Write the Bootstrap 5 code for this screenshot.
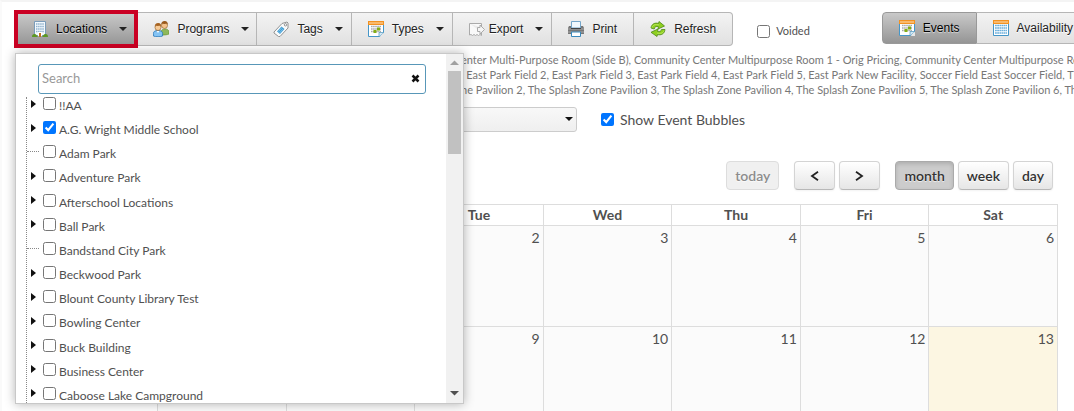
<!DOCTYPE html>
<html lang="en">
<head>
<meta charset="utf-8">
<meta name="viewport" content="width=device-width, initial-scale=1">
<title>Facility Calendar</title>
<link href="https://cdn.jsdelivr.net/npm/bootstrap@5.3.0/dist/css/bootstrap.min.css" rel="stylesheet">
<script src="https://cdn.jsdelivr.net/npm/bootstrap@5.3.0/dist/js/bootstrap.bundle.min.js"></script>
<style>
body{font-family:Lato,sans-serif;font-size:14px;color:#505050;background:#fff;overflow:hidden;min-height:100vh;border-top:2px solid #f4f4f4;border-left:2px solid #fafafa}
.toolbar{padding:10px 0 0 12px}
.tool-set{height:34px}
.view-set{height:32px;margin-left:72px}
.tool{display:flex;align-items:center;gap:8px;padding:0 16px;border:1px solid #b6b6b6;border-left-width:0;background:linear-gradient(#f3f3f3,#e1e1e1);font:12px/16px "Liberation Sans",sans-serif;color:#222;white-space:nowrap;text-shadow:0 1px 0 #fff}
.tool svg{width:16px;height:16px;flex:none}
.tool-menu{padding-right:8px}
.tool-slim{padding:0 7px 0 15px}
.tool-menu::after{content:"";border:4px solid transparent;border-top-color:#222;border-bottom:0;margin-left:4px}
.tool-on{background:linear-gradient(#c9c9c9,#959595);color:#000;border-color:#999;text-shadow:0 1px 1px #ddd}
.tool-end{border-radius:0 4px 4px 0}
.tool-start{border-radius:4px 0 0 4px;border-left-width:1px}
.tool-tight{gap:4px}
.tool-tight::after{margin-left:8px}
.marked .tool{height:100%;padding:0 10px 0 18px;border-left-width:0}
.marked::before{content:"";position:absolute;inset:-2px 0;border:4px solid #ca0023;pointer-events:none;z-index:2}
input[type=checkbox]{width:13px;height:13px;margin:0;flex:none;accent-color:#0075ff}
.voided{gap:6px;margin-left:24px;padding-top:5px;font-size:11px}
.tree-panel{position:absolute;top:51px;left:13px;width:449px;height:351px;background:#fff;border:1px solid #c8c8c8;box-shadow:0 0 10px rgba(0,0,0,.3);z-index:5;overflow:hidden}
.search-box{margin:10px 20px 0 22px}
.search-box input{height:30px;border:1px solid #5897b8;border-radius:3px;padding:0 24px 2px 3px;font-size:13px;color:#555;background:#fff;outline:0}
.search-box input::placeholder{color:#999}
.search-box button{position:absolute;right:6px;top:10px;padding:0;border:0;background:none;display:flex}
.tree{display:grid;grid-auto-rows:1fr;height:314px;margin:3px 0 0 10px;padding:0;list-style:none;border-left:1px dotted #888;font-size:12px;line-height:16px}
.tree li{display:flex;align-items:flex-start}
.twig{width:16px;flex:none;height:13px;display:flex;align-items:center}
.twig-open::before{content:"";margin-left:4px;border:4px solid transparent;border-left:5px solid #111;border-right:0}
.twig-leaf::before{content:"";width:12px;border-top:1px dotted #888}
.tree label{padding:1px 0 0 3px}
.scroll-track{width:17px;background:#f1f1f1;padding:6px 2px 7px}
.scroll-thumb{width:13px;height:83px;background:#c1c1c1;margin:5px 0 auto}
.chosen{height:45px;margin:6px 0 0;font-size:11px;line-height:15px;color:#777;overflow:hidden}
.chosen div{display:flex;white-space:pre}
.chosen span:first-child{flex:0 0 459px;overflow:hidden;display:flex;justify-content:flex-end}
.options{gap:24px;margin:10px 0 0 13px}
.options label{gap:6px}
.options select{width:562px;height:25px;border:1px solid #ccc;border-radius:3px;background:linear-gradient(#f8f8f8,#efefef);appearance:none}
.pick::after{content:"";position:absolute;right:4px;top:10px;border:4px solid transparent;border-top-color:#111;border-bottom:0;pointer-events:none}
.cal{margin:29px 16px 0 155px}
.cal-tools{gap:15px;padding-right:5px}
.cal-group{gap:4px}
.cal-btn{height:29px;padding:0 8px;border:1px solid #d4d4d4;border-bottom-color:#b8b8b8;border-radius:4px;background:linear-gradient(#fff,#e6e6e6);font-size:14px;font-weight:600;color:#333;text-shadow:0 1px 1px rgba(255,255,255,.75);box-shadow:0 1px 2px rgba(0,0,0,.05);display:flex;align-items:center;justify-content:center}
.cal-arrow{width:41px}
.cal-off{background:#f0f0f0;color:#8c8c8c;border-color:#ddd;box-shadow:none}
.cal-on{background:#ccc;border-color:#aaa;box-shadow:inset 0 2px 4px rgba(0,0,0,.15)}
.month{table-layout:fixed;width:100%;margin:14px 0 0;border-collapse:collapse}
.month th,.month td{border:1px solid #ddd;padding:0}
.month th{height:21px;line-height:20px;text-align:center}
.month td{height:101px;background:#fbfbfb;vertical-align:top;text-align:right;padding:2px 3px 0 0;line-height:20px}
.month td.today{background:#fcf6e2}
</style>
</head>
<body>
<svg width="0" height="0" class="position-absolute" aria-hidden="true">
<symbol id="i-cal" viewBox="0 0 16 16"><path d="M.5 3h15v12.500H.5z" fill="#fff" stroke="#4596c8"/><path d="M0 0h16v4H0z" fill="#f29222"/><path d="M1 2h14" stroke="#ffe0b8"/></symbol>
<symbol id="i-events" viewBox="0 0 16 16"><use href="#i-cal"/><path d="M3 5.500h10M3 8h10M3 10.500h10" stroke="#aaa" stroke-width="1.500" stroke-dasharray="1.600 .5"/><path d="M9 6.500h3v3H9zM5.500 9h3v3h-3z" fill="#83ad14"/><path d="M11 16v-4.500h5z" fill="#d3e9f6" stroke="#4b94bb" stroke-width=".7"/><path d="m11.500 16 4.500-4.500V16z" fill="#e7e7e7"/></symbol>
</svg>
<header class="toolbar d-flex align-items-start position-relative">
<div class="tool-set d-flex">
<div class="marked position-relative"><button type="button" class="tool tool-menu tool-on" aria-expanded="true"><svg viewBox="0 0 16 16"><path d="M2.500.5h11v14h-11z" fill="#f4f9fd" stroke="#7b9cba"/><path d="M4 3h8M4 5.500h8M4 8h8M4 10.500h8" stroke="#8eb1cd" stroke-width="1.500" stroke-dasharray="1.500 .6"/><path d="M6 11h4v4H6z" fill="#fff"/><path d="M7 12h2v4H7z" fill="#c07020"/><path d="M0 16c0-3 2-3.500 4-2.500L6 16zM16 16c0-3-2-3.500-4-2.500L10 16z" fill="#5c9822"/></svg>Locations</button></div>
<button type="button" class="tool tool-menu tool-slim"><svg viewBox="0 0 16 16"><path d="M8 14v-3c0-2 2-3 4-3s4 1 4 3v2c-2 1-5 1-8 1z" fill="#8eb85a" stroke="#66942e" stroke-width=".7"/><circle cx="11.500" cy="4.500" r="3" fill="#f3c28c" stroke="#8b5a22" stroke-width=".6"/><path d="M8.300 4C8 1.500 9.500 0 11.700 0s3.600 1.700 3 4l-1-1.400c-2 .6-3.800.3-4.500-.1z" fill="#98591d"/><path d="M.4 15v-2.500C.4 10.500 2 9.500 5 9.500s4.600 1 4.600 3V15c-2 1-7 1-9.200 0z" fill="#83c3f4" stroke="#2475b7" stroke-width=".8"/><circle cx="5" cy="6.500" r="3" fill="#f7cb98" stroke="#8b5a22" stroke-width=".6"/><path d="M1.800 6C1.500 3.500 3 2 5.200 2s3.600 1.700 3 4l-1-1.400c-2 .6-3.800.3-4.500-.1z" fill="#a66321"/><path d="m3.700 10 1.300 2 1.300-2z" fill="#fff"/></svg>Programs</button>
<button type="button" class="tool tool-menu"><svg viewBox="0 0 16 16"><path d="m1 11 8-8.500L14 1l1 1v5l-8 8.500H5.500L1 12z" fill="#fafafa" stroke="#929292"/><path d="m4 10.500 4.500-5 3 2.500L7 13z" fill="#439ed4"/><path d="m5.500 10.500 3.500-4M6.500 12l3.500-4" stroke="#96d2f2" stroke-width=".7"/><circle cx="12.500" cy="3.800" r="1.200" fill="#fff" stroke="#777" stroke-width=".8"/></svg>Tags</button>
<button type="button" class="tool tool-menu"><svg viewBox="0 0 16 16"><use href="#i-events"/></svg>Types</button>
<button type="button" class="tool tool-menu tool-tight"><svg viewBox="0 0 16 16"><path d="M.5 2.500h12v4M12.500 11v3.500l-1.500-1-1.500 1-1.500-1-1.500 1-1.500-1-1.500 1-1.500-1-1.500.5V2.500" fill="#f9f9f9" stroke="#aaa"/><path d="M8.500 6.500H11V4l4.500 4.500L11 13v-2.500H8.500z" fill="#f5f5f5" stroke="#aaa"/></svg>Export</button>
<button type="button" class="tool"><svg viewBox="0 0 16 16"><path d="M1 5h14l1 2v6H0V7z" fill="#777"/><path d="M0 8h16M0 11h16" stroke="#aaa"/><path d="M3.500.5h9V7h-9z" fill="#f2f9fe" stroke="#75a6ca"/><path d="M3 7.500h10" stroke="#444"/><path d="M3.500 11h9v4.500h-9z" fill="#fff" stroke="#3989bd"/></svg>Print</button>
<button type="button" class="tool tool-end"><svg viewBox="0 0 16 16"><path d="M1 7C1.500 3 5 1.300 8.500 2.500L9 .5 14.500 5 8 8l.5-2.300C6 5 5 5.500 4.200 8zM15 8.500c-.5 4.500-4 6-7.500 5L7 15.500 1 11.300 8 8l-.5 2.500c2.500.5 3.500-.2 4-2z" fill="#8fd01f" stroke="#4d8716" stroke-width=".8"/><path d="M2 6.500c1-3 4-3.500 7-2.500M14 9.500c-1 3-4 3.300-7 2.500" fill="none" stroke="#c5ed6d" stroke-width=".7"/></svg>Refresh</button>
</div>
<label class="voided d-flex align-items-center align-self-center"><input type="checkbox">Voided</label>
<div class="view-set d-flex">
<button type="button" class="tool tool-on tool-start"><svg viewBox="0 0 16 16"><use href="#i-events"/></svg>Events</button>
<button type="button" class="tool tool-end"><svg viewBox="0 0 16 16"><use href="#i-cal"/><path d="M2 5.500h12M2 8h12M2 10.500h12M2 13h12" stroke="#6db0dc" stroke-width="1.700" stroke-dasharray="1.800 .4"/></svg>Availability</button>
</div>
<div class="tree-panel d-flex">
<div class="flex-grow-1">
<div class="search-box position-relative"><input class="w-100 d-block" type="text" placeholder="Search" aria-label="Search locations"><button type="button" aria-label="Clear"><svg width="9" height="9" viewBox="0 0 9 9"><path d="m1.500 1.500 6 6m0-6-6 6" stroke="#111" stroke-width="2.500"/></svg></button></div>
<ul class="tree">
<li><span class="twig twig-open"></span><input type="checkbox" id="l1"><label for="l1">!!AA</label></li>
<li><span class="twig twig-open"></span><input type="checkbox" id="l2" checked><label for="l2">A.G. Wright Middle School</label></li>
<li><span class="twig twig-leaf"></span><input type="checkbox" id="l3"><label for="l3">Adam Park</label></li>
<li><span class="twig twig-open"></span><input type="checkbox" id="l4"><label for="l4">Adventure Park</label></li>
<li><span class="twig twig-open"></span><input type="checkbox" id="l5"><label for="l5">Afterschool Locations</label></li>
<li><span class="twig twig-open"></span><input type="checkbox" id="l6"><label for="l6">Ball Park</label></li>
<li><span class="twig twig-leaf"></span><input type="checkbox" id="l7"><label for="l7">Bandstand City Park</label></li>
<li><span class="twig twig-open"></span><input type="checkbox" id="l8"><label for="l8">Beckwood Park</label></li>
<li><span class="twig twig-open"></span><input type="checkbox" id="l9"><label for="l9">Blount County Library Test</label></li>
<li><span class="twig twig-open"></span><input type="checkbox" id="l10"><label for="l10">Bowling Center</label></li>
<li><span class="twig twig-open"></span><input type="checkbox" id="l11"><label for="l11">Buck Building</label></li>
<li><span class="twig twig-open"></span><input type="checkbox" id="l12"><label for="l12">Business Center</label></li>
<li><span class="twig twig-open"></span><input type="checkbox" id="l13"><label for="l13">Caboose Lake Campground</label></li>
</ul>
</div>
<div class="scroll-track d-flex flex-column align-items-center" aria-hidden="true"><svg width="9" height="6" viewBox="0 0 9 6"><path d="m0 5 4.500-4.500L9 5z" fill="#a0a0a0"/></svg><div class="scroll-thumb"></div><svg width="9" height="5" viewBox="0 0 9 5"><path d="m0 0 4.500 4.500L9 0z" fill="#505050"/></svg></div>
</div>
</header>
<main>
<div class="chosen">
<div><span>Community C</span><span>enter Multi-Purpose Room (Side B), Community Center Multipurpose Room 1 - Orig Pricing, Community Center Multipurpose Room</span></div>
<div><span>East Park Field 1</span><span>, East Park Field 2, East Park Field 3, East Park Field 4, East Park Field 5, East Park New Facility, Soccer Field East Soccer Field, The</span></div>
<div><span>The Splash Zo</span><span>ne Pavilion 2, The Splash Zone Pavilion 3, The Splash Zone Pavilion 4, The Splash Zone Pavilion 5, The Splash Zone Pavilion 6, The</span></div>
</div>
<div class="options d-flex align-items-center"><div class="pick position-relative d-flex"><select aria-label="Event filter"><option></option></select></div><label class="d-flex align-items-center"><input type="checkbox" checked>Show Event Bubbles</label></div>
<section class="cal">
<div class="cal-tools d-flex justify-content-end">
<button type="button" class="cal-btn cal-off">today</button>
<div class="cal-group d-flex"><button type="button" class="cal-btn cal-arrow" aria-label="Previous"><svg width="9" height="10" viewBox="0 0 9 10"><path d="M8 .8 2 5l6 4.200" fill="none" stroke="#222" stroke-width="1.800"/></svg></button><button type="button" class="cal-btn cal-arrow" aria-label="Next"><svg width="9" height="10" viewBox="0 0 9 10"><path d="M1 .8 7 5 1 9.200" fill="none" stroke="#222" stroke-width="1.800"/></svg></button></div>
<div class="cal-group d-flex"><button type="button" class="cal-btn cal-on">month</button><button type="button" class="cal-btn">week</button><button type="button" class="cal-btn">day</button></div>
</div>
<table class="month"><thead><tr><th>Sun</th><th>Mon</th><th>Tue</th><th>Wed</th><th>Thu</th><th>Fri</th><th>Sat</th></tr></thead><tbody><tr><td></td><td>1</td><td>2</td><td>3</td><td>4</td><td>5</td><td>6</td></tr><tr><td>7</td><td>8</td><td>9</td><td>10</td><td>11</td><td>12</td><td class="today">13</td></tr></tbody></table>
</section>
</main>
</body>
</html>
